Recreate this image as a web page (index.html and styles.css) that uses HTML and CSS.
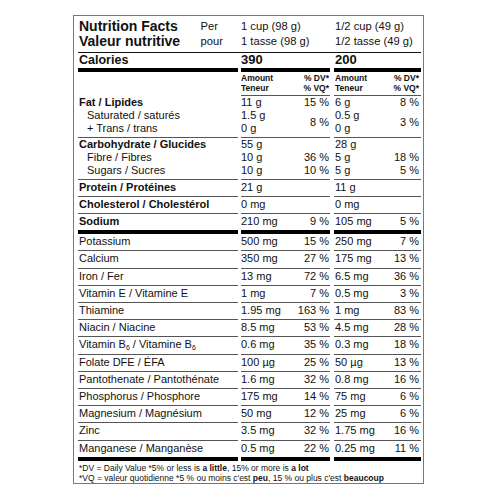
FILE: index.html
```html
<!DOCTYPE html>
<html>
<head>
<meta charset="utf-8">
<link rel="stylesheet" href="styles.css">
</head>
<body>
<div class="label">
  <div class="grid">
    <div class="cell head c1h">
      <div class="title">Nutrition Facts<br>Valeur nutritive</div>
      <div class="per">Per<br>pour</div>
    </div>
    <div class="cell head c2h">1 cup (98 g)<br>1 tasse (98 g)</div>
    <div class="cell head c3h">1/2 cup (49 g)<br>1/2 tasse (49 g)</div>

    <div class="cell cal">Calories</div>
    <div class="cell cal c2">390</div>
    <div class="cell cal c3">200</div>

    <div class="cell amt blank"></div>
    <div class="cell amt c2"><span>Amount<br>Teneur</span><span class="r">% DV*<br>% VQ*</span></div>
    <div class="cell amt c3"><span>Amount<br>Teneur</span><span class="r">% DV*<br>% VQ*</span></div>

    <div class="cell grp"><b>Fat / Lipides</b><div class="ind">Saturated / saturés<br>+ Trans / trans</div></div>
    <div class="cell grp c2"><div class="ln"><span>11 g</span><span>15 %</span></div><div class="ln mid"><span>1.5 g<br>0 g</span><span>8 %</span></div></div>
    <div class="cell grp c3"><div class="ln"><span>6 g</span><span>8 %</span></div><div class="ln mid"><span>0.5 g<br>0 g</span><span>3 %</span></div></div>

    <div class="cell grp"><b>Carbohydrate / Glucides</b><div class="ind">Fibre / Fibres<br>Sugars / Sucres</div></div>
    <div class="cell grp c2"><div class="ln"><span>55 g</span><span></span></div><div class="ln"><span>10 g</span><span>36 %</span></div><div class="ln"><span>10 g</span><span>10 %</span></div></div>
    <div class="cell grp c3"><div class="ln"><span>28 g</span><span></span></div><div class="ln"><span>5 g</span><span>18 %</span></div><div class="ln"><span>5 g</span><span>5 %</span></div></div>

    <div class="cell row"><b>Protein / Protéines</b></div>
    <div class="cell row c2"><span>21 g</span></div>
    <div class="cell row c3"><span>11 g</span></div>

    <div class="cell row"><b>Cholesterol / Cholestérol</b></div>
    <div class="cell row c2"><span>0 mg</span></div>
    <div class="cell row c3"><span>0 mg</span></div>

    <div class="cell row thick"><b>Sodium</b></div>
    <div class="cell row thick c2"><span>210 mg</span><span>9 %</span></div>
    <div class="cell row thick c3"><span>105 mg</span><span>5 %</span></div>

    <div class="cell row">Potassium</div>
    <div class="cell row c2"><span>500 mg</span><span>15 %</span></div>
    <div class="cell row c3"><span>250 mg</span><span>7 %</span></div>

    <div class="cell row">Calcium</div>
    <div class="cell row c2"><span>350 mg</span><span>27 %</span></div>
    <div class="cell row c3"><span>175 mg</span><span>13 %</span></div>

    <div class="cell row">Iron / Fer</div>
    <div class="cell row c2"><span>13 mg</span><span>72 %</span></div>
    <div class="cell row c3"><span>6.5 mg</span><span>36 %</span></div>

    <div class="cell row">Vitamin E / Vitamine E</div>
    <div class="cell row c2"><span>1 mg</span><span>7 %</span></div>
    <div class="cell row c3"><span>0.5 mg</span><span>3 %</span></div>

    <div class="cell row">Thiamine</div>
    <div class="cell row c2"><span>1.95 mg</span><span>163 %</span></div>
    <div class="cell row c3"><span>1 mg</span><span>83 %</span></div>

    <div class="cell row">Niacin / Niacine</div>
    <div class="cell row c2"><span>8.5 mg</span><span>53 %</span></div>
    <div class="cell row c3"><span>4.5 mg</span><span>28 %</span></div>

    <div class="cell row">Vitamin B<span class="sub">6</span> / Vitamine B<span class="sub">6</span></div>
    <div class="cell row c2"><span>0.6 mg</span><span>35 %</span></div>
    <div class="cell row c3"><span>0.3 mg</span><span>18 %</span></div>

    <div class="cell row">Folate DFE / ÉFA</div>
    <div class="cell row c2"><span>100 µg</span><span>25 %</span></div>
    <div class="cell row c3"><span>50 µg</span><span>13 %</span></div>

    <div class="cell row">Pantothenate / Pantothénate</div>
    <div class="cell row c2"><span>1.6 mg</span><span>32 %</span></div>
    <div class="cell row c3"><span>0.8 mg</span><span>16 %</span></div>

    <div class="cell row">Phosphorus / Phosphore</div>
    <div class="cell row c2"><span>175 mg</span><span>14 %</span></div>
    <div class="cell row c3"><span>75 mg</span><span>6 %</span></div>

    <div class="cell row">Magnesium / Magnésium</div>
    <div class="cell row c2"><span>50 mg</span><span>12 %</span></div>
    <div class="cell row c3"><span>25 mg</span><span>6 %</span></div>

    <div class="cell row">Zinc</div>
    <div class="cell row c2"><span>3.5 mg</span><span>32 %</span></div>
    <div class="cell row c3"><span>1.75 mg</span><span>16 %</span></div>

    <div class="cell row thick">Manganese / Manganèse</div>
    <div class="cell row thick c2"><span>0.5 mg</span><span>22 %</span></div>
    <div class="cell row thick c3"><span>0.25 mg</span><span>11 %</span></div>
  </div>
  <div class="foot">
    *DV = Daily Value *5% or less is <b>a little</b>, 15% or more is <b>a lot</b><br>
    *VQ = valeur quotidienne *5 % ou moins c'est <b>peu</b>, 15 % ou plus c'est <b>beaucoup</b>
  </div>
</div>
</body>
</html>
```
FILE: styles.css
```css
html, body {
  margin: 0;
  padding: 0;
  background: #fff;
}
body {
  font-family: "Liberation Sans", Arial, sans-serif;
  color: #111;
}
.label {
  box-sizing: border-box;
  width: 351px;
  margin: 15px 0 0 73px;
  border: 1px solid #777;
  padding: 3px 2px 0 4px;
}
.grid {
  display: grid;
  grid-template-columns: 160px 92px 91px;
}
.cell {
  font-size: 11px;
  line-height: 12.8px;
  border-bottom: 1px solid #555;
}
.c2 { margin-left: 3px; }
.c3 { margin-left: 4px; }
.c2, .c3 {
  display: flex;
  justify-content: space-between;
  padding-right: 1px;
}
.c3 { padding-left: 1px; padding-right: 2px; }
.c1h, .c2h, .c3h {
  margin-left: 0;
  border-bottom: 1.5px solid #111;
  padding-bottom: 4px;
}
.c1h {
  display: flex;
  justify-content: space-between;
  padding-left: 1px;
  padding-right: 15px;
}
.title {
  font-weight: bold;
  font-size: 14px;
  line-height: 14.7px;
}
.per, .c2h, .c3h {
  font-size: 11.2px;
  line-height: 14.7px;
}
.c2h { padding-left: 3px; display: block; }
.c3h { padding-left: 5px; display: block; }
.cal {
  font-weight: bold;
  font-size: 12.5px;
  line-height: 14px;
  padding-left: 1px;
  padding-bottom: 0.5px;
  border-bottom: 4px solid #000;
}
.cal.c2, .cal.c3 { font-size: 13px; }
.cal.c2 { padding-left: 0; }
.amt {
  font-weight: bold;
  font-size: 8.5px;
  line-height: 10px;
  padding: 1px 1px 2px 0;
}
.amt.blank { border-bottom-color: transparent; }
.amt.c3 { padding-left: 1px; padding-right: 2px; }
.r { text-align: right; }
.grp {
  padding-top: 0.5px;
  padding-bottom: 2px;
  display: block;
}
.grp:not(.c2):not(.c3) { padding-left: 1px; }
.grp.c2, .grp.c3 { display: block; }
.ln {
  display: flex;
  justify-content: space-between;
}
.mid { align-items: center; }
.ind { padding-left: 8px; }
.row {
  padding-top: 1px;
  padding-bottom: 2.4px;
}
.row:not(.c2):not(.c3) { padding-left: 1px; }
.thick { border-bottom: 4px solid #000; }
.sub {
  font-size: 7px;
  line-height: 0;
  vertical-align: -2px;
}
.foot {
  font-size: 8.5px;
  line-height: 10px;
  padding: 2px 0 0 1px;
}
```
